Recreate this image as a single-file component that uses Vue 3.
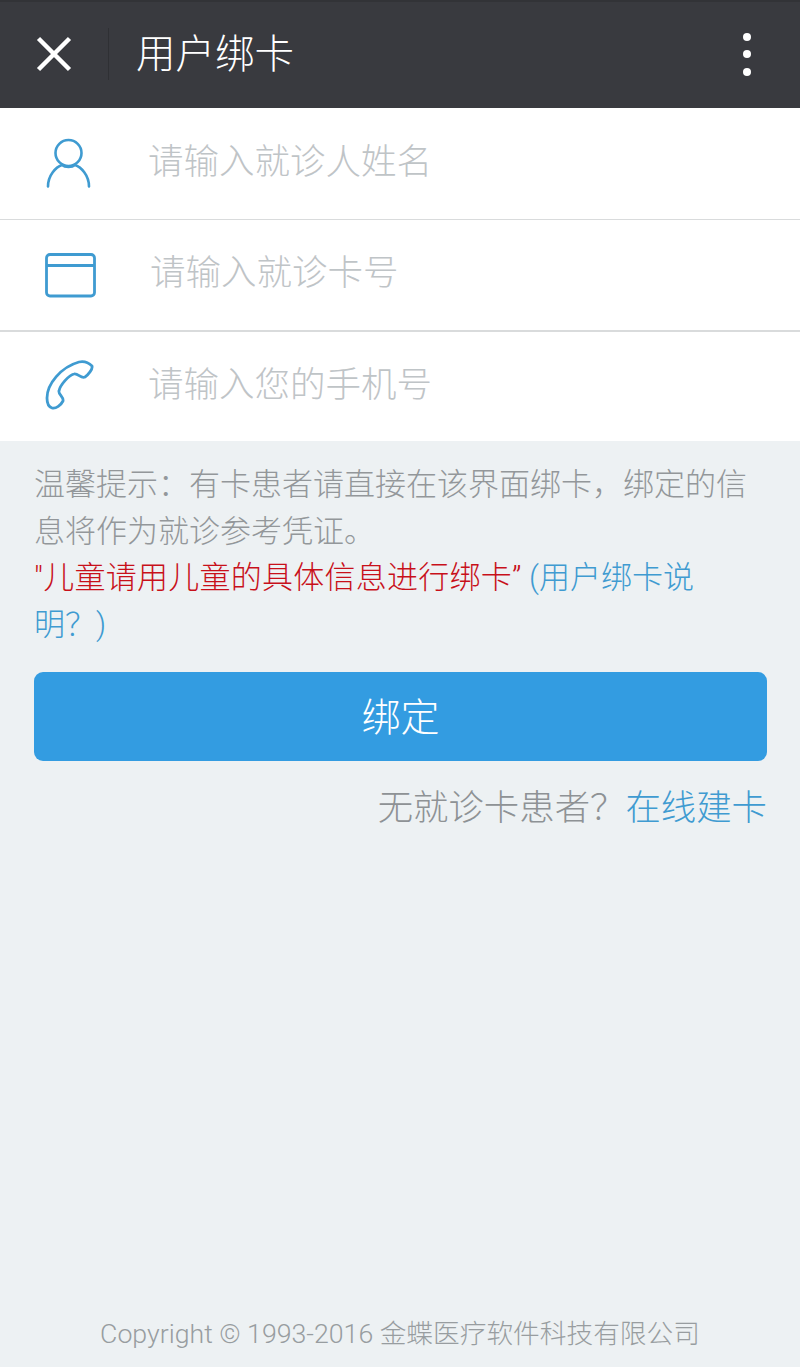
<script setup>
const fields = [
  { key: 'user', text: '请输入就诊人姓名' },
  { key: 'card', text: '请输入就诊卡号' },
  { key: 'phone', text: '请输入您的手机号' }
]
</script>

<template>
  <div class="page">
    <header class="bar">
      <svg class="close" width="38" height="38" viewBox="0 0 38 38">
        <path d="M3.5 3.5 L34.5 34.5 M34.5 3.5 L3.5 34.5" stroke="#fff" stroke-width="4.5" fill="none" />
      </svg>
      <div class="sep"></div>
      <div class="title">用户绑卡</div>
      <div class="dots"><i></i><i></i><i></i></div>
    </header>

    <section class="form">
      <div v-for="f in fields" :key="f.key" class="row" :class="'row-' + f.key">
        <div class="ico">
          <svg v-if="f.key === 'user'" width="46" height="52" viewBox="0 0 46 52" fill="none" stroke="#3f9bd1" stroke-width="2.6" stroke-linecap="round">
            <circle cx="23.5" cy="15" r="13" />
            <path d="M3 48.5 C3 37 11 29 17 27 M44 48.5 C44 37 36 29 30 27 M17 27 C20 29.5 27 29.5 30 27" />
          </svg>
          <svg v-else-if="f.key === 'card'" width="52" height="46" viewBox="0 0 52 46" fill="none" stroke="#3f9bd1" stroke-width="2.8">
            <rect x="1.5" y="2.5" width="48" height="41.5" rx="3.5" />
            <path d="M1.5 13.5 H49.5" />
          </svg>
          <svg v-else width="50" height="50" viewBox="0 0 50 50" fill="none" stroke="#3f9bd1" stroke-width="2.8" stroke-linejoin="round">
            <path d="M2 38 C2 24 16 7 34 2 C39 1 43 2 47 6 C48 9 43 15 40 17 C36 19 33 13 29 14 C24 15 15 25 14 31 C13 34 19 37 18 41 C16 45 11 49 7 48 C4 47 2 43 2 38 Z" />
          </svg>
        </div>
        <span class="ph">{{ f.text }}</span>
      </div>
    </section>

    <main class="content">
      <p class="tip">温馨提示&#xFF1A;有卡患者请直接在该界面绑卡&#xFF0C;绑定的信息将作为就诊参考凭证。<br /><span class="red">"儿童请用儿童的具体信息进行绑卡&#x201D;</span> <span class="blue">(用户绑卡说明&#xFF1F;)</span></p>
      <div class="btn">绑定</div>
      <div class="hint">无就诊卡患者&#xFF1F;<span class="blue">在线建卡</span></div>
    </main>

    <footer class="foot">Copyright © 1993-2016 金蝶医疗软件科技有限公司</footer>
  </div>
</template>

<style>
html, body { margin: 0; padding: 0; }
</style>

<style scoped>
.page {
  width: 800px;
  height: 1367px;
  display: flex;
  flex-direction: column;
  background: #edf1f3;
  font-family: Roboto, "Noto Sans CJK SC", "Noto Sans", sans-serif;
  font-weight: 300;
  overflow: hidden;
}
.bar {
  height: 108px;
  flex: none;
  display: flex;
  align-items: center;
  background: #393a3f;
  box-shadow: inset 0 2px 0 #323337;
  box-sizing: border-box;
  padding-left: 35px;
  color: #fff;
}
.close { flex: none; }
.sep { width: 1px; height: 52px; background: #2f3034; margin-left: 35px; }
.title { font-size: 39.5px; margin-left: 27px; line-height: 50px; flex: 1; margin-top: 2px; }
.dots { display: flex; flex-direction: column; gap: 9.5px; margin-right: 49px; }
.dots i { display: block; width: 8px; height: 8px; border-radius: 50%; background: #fff; }
.form { background: #fff; flex: none; }
.row { height: 112px; display: flex; align-items: center; box-sizing: border-box; border-bottom: 1px solid #d9dbdc; }
.row-card { border-bottom: 2px solid #d9dbdc; }
.row-phone { border-bottom: 0; height: 109px; }
.row-phone .ico { padding-bottom: 4px; }
.ico { width: 148px; flex: none; display: flex; justify-content: flex-start; padding-left: 45px; box-sizing: border-box; }
.row-card .ph { margin-left: 2px; }
.ph { font-size: 35.5px; color: #bfc4c7; line-height: 50px; margin-bottom: 4px; }
.content { padding: 21px 46px 0 34px; flex: 1; }
.tip { margin: 0; font-size: 31px; line-height: 46.5px; color: #93979a; }
.red { color: #c8101a; letter-spacing: 0.25px; }
.blue { color: #3f9bd1; }
.btn {
  margin: 24px -13px 0 0;
  height: 89px;
  box-sizing: border-box;
  padding-bottom: 6px;
  background: #339ce1;
  border-radius: 9px;
  color: #fff;
  font-size: 39px;
  display: flex;
  align-items: center;
  justify-content: center;
}
.hint { margin: 22px -13px 0 0; text-align: right; font-size: 35.4px; line-height: 50px; color: #8e9295; }
.foot { flex: none; text-align: center; font-size: 26.7px; line-height: 36px; color: #989da0; padding-bottom: 15px; }
</style>
